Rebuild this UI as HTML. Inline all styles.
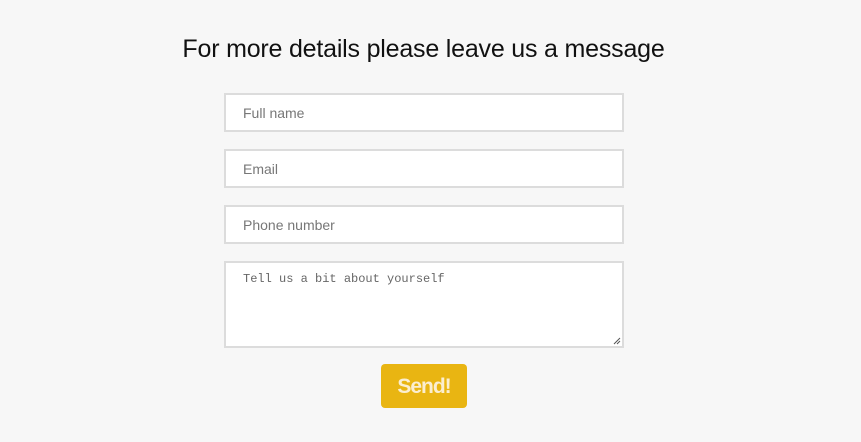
<!DOCTYPE html>
<html><head><style>
body{margin:0;background:#f7f7f7;width:861px;height:442px;font-family:"Liberation Sans",sans-serif;position:relative;overflow:hidden}
h1{position:absolute;top:35px;left:0;width:847px;text-align:center;margin:0;font-weight:normal;font-size:25px;color:#111;letter-spacing:-0.2px}
.f{position:absolute;left:224px;width:400px;height:39px;box-sizing:border-box;border:2px solid #dcdcdc;background:#fff;font-size:14px;color:#777;padding:10px 0 0 17px}
.t{height:87px;font-family:"Liberation Mono",monospace;font-size:12px;padding:9px 0 0 17px;color:#666}
.btn{position:absolute;left:381px;top:364px;width:86px;height:44px;background:#e9b512;border-radius:4px;color:#fbeed0;font-weight:bold;font-size:21px;text-align:center;line-height:46px;letter-spacing:-1px}
</style></head><body>
<h1>For more details please leave us a message</h1>
<div class="f" style="top:93px">Full name</div>
<div class="f" style="top:149px">Email</div>
<div class="f" style="top:205px">Phone number</div>
<div class="f t" style="top:261px">Tell us a bit about yourself
<svg style="position:absolute;right:1px;bottom:1px" width="8" height="8"><path d="M1 7L7 1M4 7L7 4" stroke="#555" stroke-width="1"/></svg></div>
<div class="btn">Send!</div>
</body></html>
